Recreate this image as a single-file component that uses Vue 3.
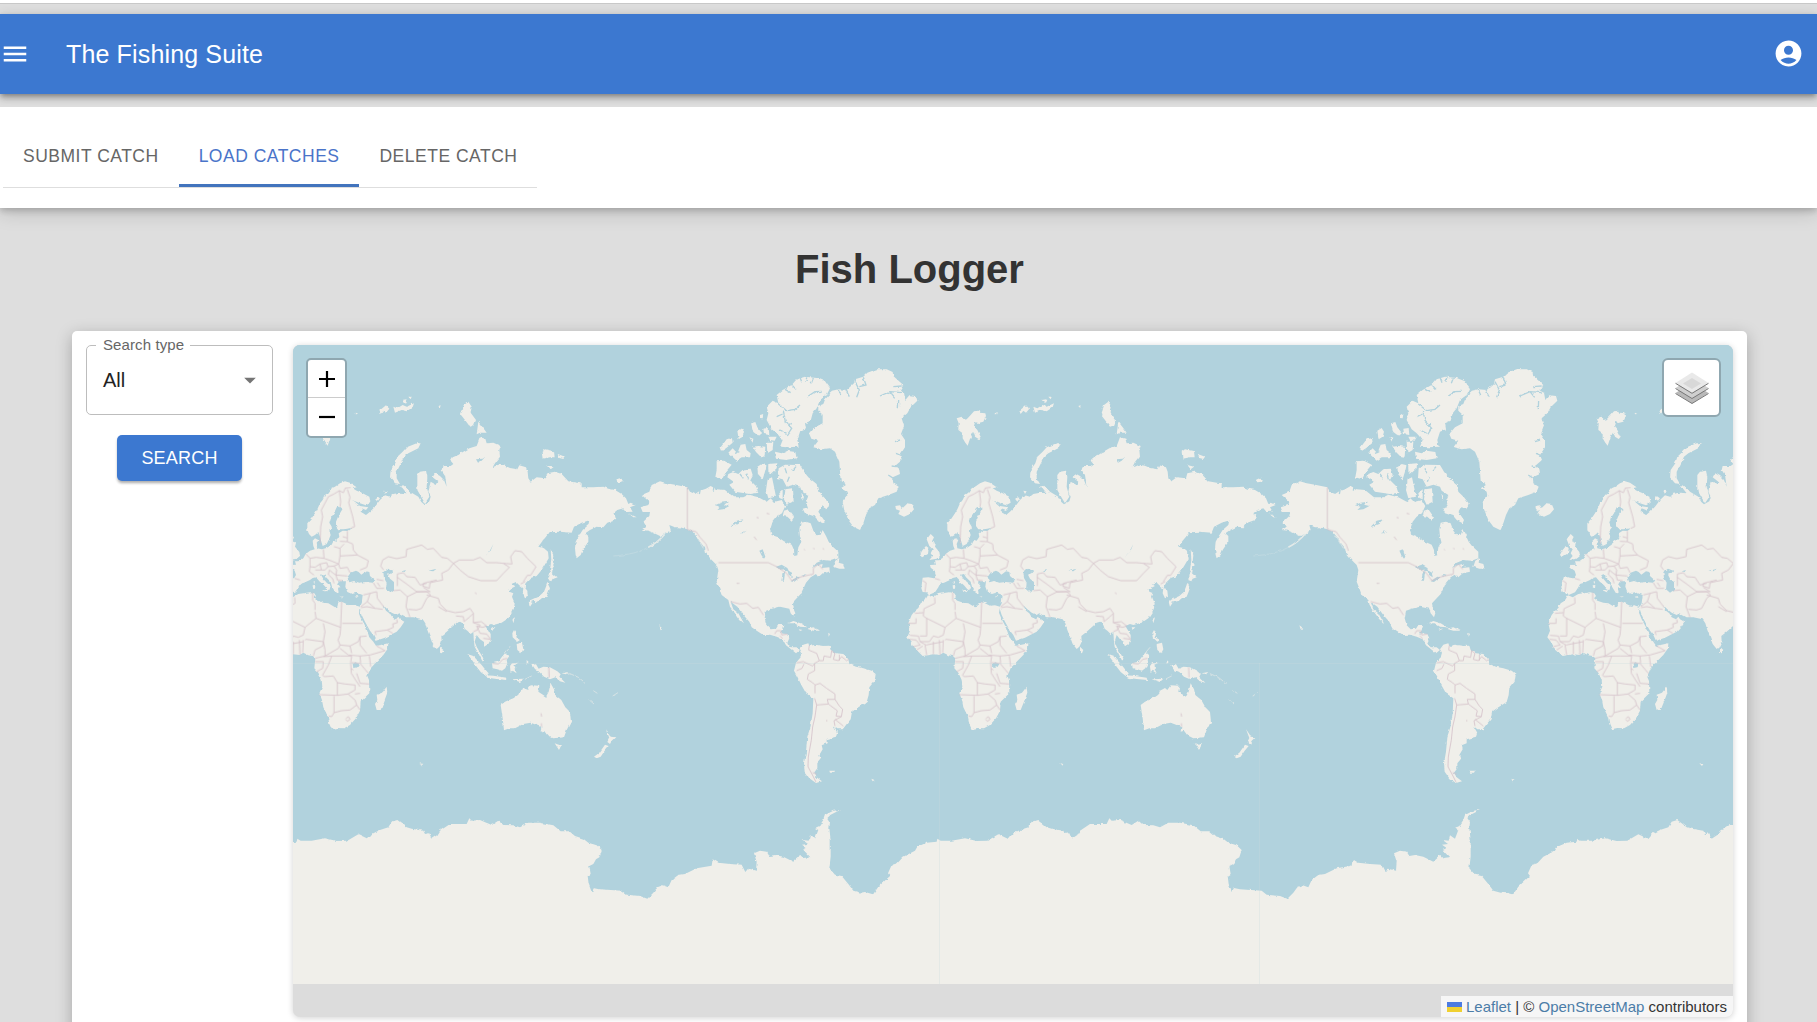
<script setup>
const tabs = [
  { label: 'Submit Catch', active: false },
  { label: 'Load Catches', active: true },
  { label: 'Delete Catch', active: false },
]

// Horizontal offsets of the repeated world
const worlds = [-640, 0, 640]

const oldWorld = [
  // Europe and Asia
  'M270 428L255 424 240 430 225 440 215 445 205 458 195 465 188 480 180 490 172 508 165 520 155 535 142 550 142 570 147 582 155 590 165 585 175 576 180 590 184 605 188 618 200 612 206 600 212 585 208 572 216 562 208 548 212 535 222 520 230 502 240 500 248 506 240 520 234 530 228 545 228 558 235 568 250 568 262 566 275 563 262 573 248 572 236 580 238 590 230 602 222 600 215 614 200 624 185 628 172 625 170 612 175 600 165 595 158 602 160 618 164 628 150 632 137 642 130 655 118 664 105 664 108 674 90 675 92 683 104 692 108 705 102 715 85 712 68 713 66 728 64 745 68 756 80 757 86 765 105 757 115 742 120 732 132 728 150 720 158 714 168 712 178 724 192 736 202 748 208 751 212 738 200 728 190 716 183 704 192 702 198 712 212 725 216 740 228 760 236 758 234 746 243 744 234 732 238 724 258 724 256 740 262 756 276 762 290 758 308 765 305 790 298 803 305 825 315 845 330 872 340 885 348 902 375 893 410 875 422 862 433 845 420 838 415 830 408 838 395 832 388 820 378 812 370 796 382 808 395 818 410 825 418 820 440 832 460 832 488 838 496 850 502 870 510 890 518 912 530 927 538 920 545 905 544 888 560 875 575 862 590 848 600 845 608 850 614 866 622 872 632 882 640 876 642 905 644 920 655 940 668 965 670 955 660 938 650 920 644 905 650 885 660 898 672 906 672 920 685 912 692 900 692 885 682 868 676 858 690 852 700 855 725 848 745 835 755 820 762 805 764 790 756 770 760 760 748 755 746 748 765 738 755 732 768 726 778 736 790 745 788 760 795 775 804 770 802 752 794 742 798 728 812 714 830 708 845 690 856 672 866 655 864 635 852 625 835 620 848 602 858 590 868 577 900 575 935 578 942 560 965 548 988 541 985 555 968 570 955 590 947 605 945 625 947 645 950 655 962 645 968 630 985 605 985 588 976 580 990 570 1010 560 1030 562 1042 548 1065 540 1070 528 1060 520 1072 510 1090 505 1100 516 1118 515 1110 502 1127 495 1112 488 1105 492 1098 475 1085 462 1065 450 1045 446 1030 440 1000 442 965 442 965 430 950 428 925 424 905 402 885 395 862 400 858 415 830 412 812 425 805 415 803 395 798 382 778 376 772 388 750 384 735 377 715 374 698 382 705 370 720 350 718 330 722 318 700 308 680 310 676 296 660 292 655 305 650 318 628 325 610 335 595 345 578 352 572 362 580 372 572 378 548 378 545 390 555 405 560 440 552 420 540 408 525 400 518 412 535 425 530 435 512 425 508 440 505 455 512 470 508 484 492 493 484 486 475 470 450 455 430 435 428 445 440 460 420 458 400 462 390 470 375 466 360 480 345 500 330 515 318 525 302 515 305 505 318 510 325 502 300 498 285 485 276 480 300 490 318 496 332 488 328 470 305 458 290 452 278 445 290 442Z',
  // Africa
  'M300 800L285 796 270 797 255 790 245 785 235 787 232 800 225 802 205 790 190 788 172 782 162 775 168 768 163 760 150 757 115 762 98 772 84 766 74 782 62 790 55 804 45 812 35 825 25 850 30 872 22 892 32 905 40 922 55 935 68 948 100 943 118 945 130 938 145 946 158 948 166 955 163 985 175 998 185 1020 187 1040 178 1060 186 1080 190 1102 204 1130 208 1152 215 1168 232 1164 252 1165 270 1155 288 1135 300 1112 302 1085 328 1060 327 1020 322 1008 332 985 350 965 370 945 384 925 385 910 365 914 348 917 340 905 328 892 318 862 305 838 297 818Z',
  // Arctic islands
  'M170 235L185 230 190 240 200 238 212 225 222 214 235 212 238 218 256 220 258 228 250 245 235 249 225 246 222 258 232 270 242 290 236 297 225 290 220 276 212 290 203 317 196 308 188 295 188 280 175 270 176 250Z',
  'M482 310L470 310 440 322 428 335 412 350 406 370 392 390 390 412 405 430 420 432 410 415 410 395 425 365 432 350 445 340 475 325Z',
  'M472 405L480 395 498 392 502 410 500 440 508 470 495 490 486 475 472 450Z',
  'M612 195L625 185 635 200 632 218 648 240 642 256 630 260 615 240 603 225 608 210ZM655 245L668 262 680 278 660 278 650 283Z',
  'M845 335L855 328 882 334 884 352 870 352 848 356ZM893 342L915 350 910 357 898 354ZM862 375L882 380 872 388ZM1068 420L1085 416 1088 424 1072 427Z',
  'M358 212L378 196 388 206 378 218 370 212 362 222ZM400 200L412 205 428 195 440 200 462 190 458 202 440 214 425 210 405 218ZM425 180L440 178 435 188ZM445 170L455 170 452 178ZM535 198L542 196 540 203ZM285 218L292 222 284 223ZM370 452L380 454 375 462ZM350 468L360 475 352 485 346 478ZM418 438L435 440 450 455 432 446Z',
  // Britain and Ireland
  'M92 582L102 592 96 604 108 608 105 620 118 636 120 648 110 656 88 660 98 648 92 640 98 628 88 618 80 598ZM66 632L78 618 86 624 84 642 66 652 60 645Z',
  // Islands of Asia
  'M872 628L880 645 878 665 884 675 878 685 876 702 870 690 874 660ZM870 695L890 712 878 716 874 724 864 720 868 708ZM862 728L870 745 860 770 845 775 835 784 820 783 808 788 812 780 838 768 852 755 858 740ZM806 785L818 788 810 800ZM826 782L838 782 830 788ZM540 920L550 930 546 940 540 938ZM757 838L765 832 760 850ZM695 862L706 862 698 870ZM762 870L768 880 766 892 780 900 772 905 758 892 757 880ZM770 912L786 908 790 928 784 940 772 930ZM748 925L754 918 736 940Z',
  'M622 942L640 948 665 975 675 988 686 1000 680 1010 662 996 650 980 636 960ZM676 1006L700 1007 720 1010 740 1013 742 1020 710 1017 684 1013ZM755 1018L790 1016 780 1026 762 1020ZM696 970L715 965 726 950 736 938 748 948 740 960 742 970 736 985 726 992 712 988 698 985ZM750 978L756 970 776 968 760 976 770 984 764 988 770 1000 758 992 752 1000ZM800 960L806 966 800 972Z',
  'M814 975L828 973 836 986 850 980 870 982 892 994 902 1003 898 1010 916 1028 900 1024 886 1012 870 1018 852 1010 838 996 824 990ZM905 1000L925 996 918 1003Z',
  'M722 1095L735 1085 760 1075 775 1064 780 1052 795 1044 802 1050 812 1036 838 1037 835 1055 858 1070 866 1055 872 1030 882 1048 886 1065 904 1080 916 1102 930 1116 933 1145 920 1170 912 1192 880 1195 862 1186 852 1172 842 1175 844 1160 828 1154 812 1148 790 1152 765 1165 748 1165 732 1171 728 1135ZM884 1210L896 1214 906 1212 897 1230Z',
  'M1038 1168L1048 1182 1052 1190 1066 1192 1055 1202 1050 1212 1042 1206 1048 1194ZM1035 1214L1046 1218 1034 1232 1022 1250 1010 1255 1002 1250 1018 1238Z',
  'M380 1040L382 1058 372 1085 362 1110 350 1110 345 1092 352 1080 350 1064 366 1058Z',
  // Mediterranean islands
  'M158 736L166 735 165 746 159 746ZM160 725L165 724 164 732ZM186 750L204 750 200 757ZM238 770L252 769 246 772ZM284 770L296 768 290 773Z',
]

const oldWorldWater = [
  'M262 712L272 698 288 692 296 696 304 704 318 694 328 696 330 708 346 722 338 728 318 726 298 728 282 723 268 727Z',
  'M370 696L384 686 400 692 394 700 384 704 390 716 402 726 402 750 390 758 378 748 380 728 372 714Z',
  'M700 612L692 632 674 650 688 635Z',
  'M278 972L286 967 298 972 292 982 280 984Z',
  'M648 358L668 356 676 350 665 362 654 368ZM505 692L530 686 520 694ZM425 694L438 690 434 696Z',
]

const oldWorldBorders = [
  'M180 612L182 560 188 530 184 510 205 470 222 462 238 452 250 458 256 444 272 442M238 452L242 485 240 500M262 448L270 472 266 488 278 530 284 560 272 565M262 573L262 605 240 604M248 590L262 594M262 605L278 612 280 630 292 645 240 648 240 625 252 612M240 625L222 620M292 645L325 662 320 682 300 690M240 648L236 672 240 685 262 682 270 698M190 628L192 655 212 662 236 672M192 655L168 652 150 655 138 642M150 655L150 680 165 682 180 672 200 668 204 680 222 678 236 672M150 680L148 695 162 705M204 680L195 690 184 690M222 678L230 690 228 705 262 708M208 690L220 700 228 705 232 720 248 722M208 690L205 704 218 716 222 730M68 722L78 728 75 755M104 715L120 720M166 690L184 690 180 672',
  'M371 690L362 678 368 660 385 650 410 656 438 650 440 628 485 615 502 628 520 625 545 652 562 655 580 670 598 660 640 660 660 652 680 668 710 668 730 670 756 672 752 650 765 632 785 635 802 655 828 680 812 706 802 706M580 670L565 690 545 700 548 720 510 728 508 745 488 738 490 730 530 720M580 670L600 690 625 710 662 722 710 722 730 700 748 682 730 670M802 706L790 725M412 738L412 702 430 698 440 710 465 712 480 735 500 730M412 712L440 732 470 755 510 755 490 742M400 752L420 750 442 770 438 800 450 832M442 770L470 756 500 755 512 765 500 775 485 805 470 810 445 808M500 765L535 775 540 792 560 812 585 818 610 815 630 805 640 820 630 830 612 845 610 830 588 828M535 800L560 815M640 820L640 848 660 855 652 870 640 875M640 848L664 845 680 858 668 862 650 858 660 880 680 882 692 898 670 895',
  'M340 728L350 745 372 745M350 718L370 722M352 728L360 740M310 765L330 760 350 755M330 760L322 785 302 800M350 755L352 775 372 802M322 785L345 805 368 808M303 803L320 800 345 805M348 885L345 875 382 870 400 862 398 852 412 848 410 838M382 870L398 880',
  'M158 757L158 780 165 790 165 810M165 815L168 835 242 862 245 785M247 850L308 850M242 862L240 885 234 900 240 915 235 925 195 948M168 835L135 862 80 835M190 850L195 875 190 905 195 930M135 862L130 885 115 892 100 888 88 905 60 905 55 888 30 886M80 835L80 888 60 888M80 835L70 828 72 806 105 790 104 772M45 820L70 818M25 850L48 850 48 835M135 900L138 898 190 905 188 918 165 930 160 948M130 900L128 938M118 900L120 945M100 905L100 943M75 915L80 945M60 905L78 915 130 905M28 898L48 900 60 915 40 920M50 930L68 918M195 930L195 948 165 955M240 915L270 918 295 905 300 890 320 888M240 925L265 945 300 948 330 945 375 932 350 918M270 918L275 940M300 890L300 915 320 940M165 965L190 965 188 985 170 995M190 950L215 948 240 948 275 948 272 968 274 1000 290 1025 300 1040M215 948L205 975 188 1005 192 1010 220 1008 232 1028 255 1032 285 1035M275 968L300 970 325 1000M300 948L302 970M328 948L332 980M272 985L280 990M290 1000L300 1030 328 1032M178 1064L232 1066 264 1062 285 1050 285 1035M232 1028L232 1066M264 1062L285 1080 290 1095 270 1110 245 1112 222 1118 222 1068M285 1062L300 1060M222 1118L215 1130 206 1128M290 1095L300 1110M258 1135L265 1130 270 1138 262 1144 257 1138',
  'M866 982L867 1012M698 970L715 972 728 958 742 955M843 1120L845 1130M844 1150L845 1160M645 758L650 762M795 725L782 732',
]

const northAmerica = [
  'M125 465L148 455 155 435 180 424 200 430 225 434 262 442 270 455 285 462 300 452 318 446 332 438 350 448 375 450 390 462 402 472 430 472 445 464 475 472 500 485 512 475 522 486 545 480 556 498 546 520 530 530 518 545 510 570 515 585 535 592 552 604 575 614 582 630 583 648 592 646 595 622 604 605 600 590 598 568 602 548 618 545 632 550 640 572 650 586 662 584 668 570 678 588 686 605 696 618 715 635 715 655 695 662 670 660 650 668 636 684 652 676 668 672 665 684 688 682 690 695 668 700 655 712 648 702 632 712 618 728 612 742 602 762 590 775 576 790 578 800 586 820 582 832 572 820 568 806 540 800 515 806 498 812 494 835 500 856 512 868 528 866 535 855 550 855 545 870 540 880 562 882 568 895 562 908 572 922 590 922 600 930 588 940 576 930 558 916 548 898 530 890 510 884 490 885 470 872 455 862 448 845 430 825 412 800 392 785 400 808 415 820 432 850 418 838 405 820 390 800 385 780 365 765 358 745 350 725 355 690 350 675 335 660 318 640 315 625 300 605 290 590 278 575 262 568 240 562 225 562 208 555 212 570 195 582 180 588 160 578 145 572 125 570 140 560 130 545 148 528 150 516 128 516 122 502 145 495 148 485Z',
  // Arctic archipelago
  'M500 200L518 182 535 190 530 165 548 150 575 135 590 118 615 110 650 114 675 124 690 145 680 165 660 180 650 205 638 220 632 242 615 250 618 268 600 275 592 300 596 320 565 322 540 320 548 300 530 280 515 268 500 240 505 220Z',
  'M525 335L545 340 560 332 586 336 590 355 560 360 528 356Z',
  'M536 385L555 374 600 375 612 395 625 412 650 432 655 455 672 472 686 490 680 508 665 498 655 515 672 540 668 550 650 540 640 528 615 520 608 506 630 500 618 482 625 465 605 452 600 440 580 434 560 440 548 418 534 414Z',
  'M385 402L400 396 415 402 430 388 452 386 458 405 450 420 468 438 475 458 452 462 425 458 405 455 388 434 402 426 382 412Z',
  'M350 364L372 362 395 374 380 392 366 418 346 412 350 390Z',
  'M362 322L380 298 396 295 398 308 378 325 366 332ZM385 338L398 325 412 340 422 314 436 312 440 330 452 340 450 352 425 352 410 362ZM412 272L425 264 432 275 428 290 416 298ZM453 250L466 246 472 262 486 280 476 288 460 276ZM490 266L506 264 508 285 492 282ZM458 320L475 318 496 320 494 350 480 348 468 336ZM500 305L520 305 518 330 502 340ZM448 292L460 296 458 308ZM505 290L530 290 524 302 510 300ZM480 225L490 222 488 235 480 234ZM538 285L552 290 545 300Z',
  'M472 380L485 372 500 376 494 398 488 418 474 402ZM505 372L532 370 530 385 514 400 504 396ZM503 418L516 412 522 440 528 470 505 475 498 450ZM535 460L548 448 548 478 538 474ZM556 448L576 445 578 485 560 494 552 478ZM604 462L612 470 608 482ZM552 512L565 508 582 532 575 542 562 530 548 528ZM620 490L640 490 645 500 625 505Z',
  // Greenland
  'M628 282L645 262 668 250 668 224 655 212 655 198 670 192 680 166 696 152 715 148 740 150 762 130 765 118 790 110 802 98 830 88 860 88 878 96 880 108 910 135 900 152 912 158 916 180 928 166 948 168 952 182 932 202 922 220 905 235 912 258 903 282 915 300 915 322 900 345 906 360 885 378 898 390 900 402 878 412 880 430 896 440 890 455 865 465 835 475 825 495 808 505 798 525 790 550 780 570 760 560 745 540 732 508 728 485 742 468 740 455 722 445 738 435 722 422 720 395 718 365 705 335 690 325 665 328 640 322 655 302 634 296Z',
  'M886 498L900 496 905 504 920 490 935 492 942 508 930 522 912 530 895 522 900 512 888 508Z',
  'M706 662L718 654 716 668 730 672 734 686 718 686 700 680ZM565 850L580 843 602 850 622 862 600 860 584 850ZM620 866L640 862 662 872 640 872ZM596 868L608 870 600 873ZM685 878L690 882 686 890ZM178 856L188 863 182 868ZM48 420L58 415 68 422 55 427ZM85 520L110 532 100 532ZM660 690L680 694 664 700Z',
]

const northAmericaWater = [
  'M345 496L362 488 385 485 372 494 388 498 370 508 352 510 362 500ZM392 560L410 542 430 538 415 552 395 560ZM422 580L440 572 430 580ZM478 632L488 628 496 650 492 656 484 645Z',
  'M528 680L545 674 562 684 568 696 550 688 536 690ZM548 700L556 692 552 722 544 722ZM562 690L576 698 578 712 566 704ZM572 724L592 710 600 712 582 726ZM604 708L620 702 610 710Z',
]

const northAmericaInlets = [
  'M535 192L560 212 585 208 600 195M550 215L556 245 575 265 562 285M530 230L548 222M600 112L606 128M620 112L618 126M640 114L634 130M575 134L588 148M555 148L572 158M625 168L645 155 665 154M575 250L565 260M668 182L690 160M738 150L748 170M765 125L778 150 770 172M790 112L798 135 778 140M715 150L722 165M840 168L870 155 905 158M870 155L884 172M905 138L880 140M896 180L895 205M900 300L885 305M900 345L888 340M888 380L875 378M880 415L865 405M722 425L735 430M725 455L738 455M560 400L555 385M578 392L588 380M568 410L562 425M420 402L430 415M440 400L445 418M405 340L418 335M300 452L298 462M342 440L340 452M475 285L468 300M540 270L560 280M508 350L520 335M545 535L556 545M500 350L505 420',
]

const northAmericaBorders = [
  'M262 442L262 568 275 572 288 575 300 592 318 612 325 632M355 668L505 668 530 680 560 700 575 722 605 710 640 702 640 685 655 672 668 688M392 785L420 792 440 790 458 805 475 802 490 825M524 882L530 872 542 872 545 885 562 882M540 888L548 896M470 532L476 534M500 520L508 522M462 590L470 600M410 730L418 730M640 625L644 627M668 625L672 628M612 628L615 630',
]

const southAmerica = [
  'M60 88L70 74 85 70 88 78 105 74 130 78 148 77 152 90 168 100 190 102 205 118 208 132 228 140 250 145 275 152 287 162 284 182 268 202 266 225 260 246 235 262 216 275 212 298 198 315 188 328 172 328 160 318 172 338 168 350 140 358 140 370 125 376 128 388 118 405 122 418 112 430 112 445 102 458 110 472 126 484 108 489 88 475 74 455 72 430 78 395 82 350 92 318 98 280 100 235 78 220 64 195 52 170 42 152 48 128 62 112 66 98Z',
  'M148 452L165 452 162 458 150 458ZM274 476L284 480 278 484ZM232 542L236 544ZM838 430L850 432 846 438Z',
]

const southAmericaBorders = [
  'M88 76L86 90 110 100 118 122 130 122 132 108 152 112 155 92M155 92L165 100 160 118 175 122 185 110 200 122 206 118M178 104L178 122M118 122L104 130 104 152 85 162 82 178 98 188 105 195 105 220M50 128L70 125 98 138 104 130M50 152L66 145 72 132M105 195L120 190 140 205 165 222 165 238 142 238 145 252 110 255 104 235M165 238L178 258 188 268 184 290 168 288 172 272 145 252M184 290L162 302 165 318M165 298L190 318M110 255L105 290 98 320 94 360 85 410 84 440 100 470 108 486M138 302L142 302M98 458L110 462',
]

const antarctica =
  'M-624 824L-620 822-605 800-570 768-576 760-565 735-548 730-530 710-495 692-488 680-460 668-430 665-428 656-418 662-385 662-345 655-310 663-278 662-245 643-215 657-200 640-180 630-155 622-145 605-128 600-112 612-100 622-85 626-50 632-45 642-32 640-25 656-8 645 0 632 30 612 80 612 88 595 95 602 120 600 155 615 175 602 190 615 220 616 240 622 265 608 300 608 340 616 362 634 388 634 405 648 430 656 445 668 470 676 485 690 478 712 468 718 460 732 448 738 452 762 443 768 446 792 455 816 462 804 480 808 545 812 560 824 600 828 622 836 640 818 652 802 668 796 685 802 695 780 715 765 735 762 770 745 815 737 818 718 835 728 870 732 905 734 916 756 924 746 948 752 950 725 942 700 960 692 980 695 988 708 1005 705 1030 710 1060 725 1075 712 1080 704 1090 714 1108 712 1088 690 1100 684 1086 674 1104 672 1088 660 1106 662 1110 646 1125 656 1135 630 1125 624 1138 618 1150 600 1155 585 1180 572 1200 570 1172 584 1162 594 1170 606 1168 625 1172 660 1172 710 1168 745 1185 764 1205 768 1225 792 1240 812 1262 818 1275 816 1304 824V1110H-624Z'
</script>

<template>
  <div class="page">
    <div class="top-edge"></div>
    <header class="appbar">
      <svg class="menu" viewBox="0 0 24 24"><path d="M3 18h18v-2H3v2zm0-5h18v-2H3v2zm0-7v2h18V6H3z" /></svg>
      <span class="brand">The Fishing Suite</span>
      <svg class="account" viewBox="0 0 24 24">
        <path d="M12 2C6.48 2 2 6.48 2 12s4.48 10 10 10 10-4.48 10-10S17.52 2 12 2zm0 4c1.93 0 3.5 1.57 3.5 3.5S13.93 13 12 13s-3.5-1.57-3.5-3.5S10.07 6 12 6zm0 14c-2.03 0-4.43-.82-6.14-2.88C7.55 15.8 9.68 15 12 15s4.45.8 6.14 2.12C16.43 19.18 14.03 20 12 20z" />
      </svg>
    </header>

    <nav class="tabbar">
      <div class="tabs">
        <button v-for="t in tabs" :key="t.label" class="tab" :class="{ active: t.active }">{{ t.label }}</button>
      </div>
    </nav>

    <h1>Fish Logger</h1>

    <main class="card">
      <aside class="filters">
        <fieldset class="select">
          <legend>Search type</legend>
          <div class="field">
            <span>All</span>
            <svg viewBox="0 0 24 24"><path d="M7 10l5 5 5-5z" /></svg>
          </div>
        </fieldset>
        <button class="search">Search</button>
      </aside>

      <section class="map">
        <svg class="tiles" viewBox="293 345 1440 639">
          <defs>
            <filter id="coast" x="0" y="0" width="100%" height="100%">
              <feTurbulence type="fractalNoise" baseFrequency="0.22" numOctaves="2" seed="4" />
              <feDisplacementMap in="SourceGraphic" scale="3" xChannelSelector="R" yChannelSelector="G" />
            </filter>
          </defs>
          <rect class="sea" x="293" y="345" width="1440" height="639" />
          <g filter="url(#coast)">
            <rect class="sea" x="283" y="335" width="1460" height="659" />
            <g v-for="dx in worlds" :key="dx" :transform="`translate(${dx} 0)`">
              <g transform="translate(900 340) scale(.33333)">
                <path v-for="d in oldWorld" :key="d" class="land" :d="d" />
                <path v-for="d in oldWorldWater" :key="d" class="sea" :d="d" />
                <path class="reef" d="M928 1000L955 1012 978 1030M1000 1052L1012 1060M988 1080L1002 1092M1058 1068L1074 1058M735 940L750 922M795 1018L815 1008" />
              </g>
              <g transform="translate(600 340) scale(.33333)">
                <path v-for="d in northAmerica" :key="d" class="land" :d="d" />
                <path v-for="d in northAmericaWater" :key="d" class="sea" :d="d" />
                <path v-for="d in northAmericaInlets" :key="d" class="inlet" :d="d" />
                <path class="chain" d="M195 582Q175 606 145 622" />
                <path class="reef faint" d="M145 622Q110 643 40 648" />
                <path class="reef" d="M290 590L310 625" />
              </g>
              <g transform="translate(780 620) scale(.33333)">
                <path v-for="d in southAmerica" :key="d" class="land" :d="d" />
              </g>
              <g transform="translate(1080 620) scale(.33333)">
                <path class="land" :d="antarctica" />
              </g>
            </g>
          </g>
          <g v-for="dx in worlds" :key="dx" :transform="`translate(${dx} 0)`">
            <g transform="translate(900 340) scale(.33333)">
              <path v-for="d in oldWorldBorders" :key="d" class="border" :d="d" />
            </g>
            <g transform="translate(600 340) scale(.33333)">
              <path v-for="d in northAmericaBorders" :key="d" class="border" :d="d" />
            </g>
            <g transform="translate(780 620) scale(.33333)">
              <path v-for="d in southAmericaBorders" :key="d" class="border" :d="d" />
            </g>
          </g>
          <path class="seam" d="M293 663.500H1733M939.500 663V984M1259.500 663V984" />
        </svg>

        <div class="zoom">
          <button>
            <svg viewBox="0 0 16 16"><path d="M0 8h16M8 0v16" /></svg>
          </button>
          <button>
            <svg viewBox="0 0 16 16"><path d="M0 8h16" /></svg>
          </button>
        </div>

        <div class="layers">
          <svg viewBox="0 0 34 33">
            <path d="M.5 21L17 11l16.500 10L17 31.500z" fill="#b9b9b9" />
            <path d="M.5 21.500L17 31.500l16.500-10" fill="none" stroke="#777" />
            <path d="M.5 16L17 6l16.500 10L17 26.500z" fill="#cfcfcf" />
            <path d="M.5 16.500L17 26.500l16.500-10" fill="none" stroke="#777" />
            <path d="M.5 11L17 .5 33.500 11 17 21z" fill="#e9e9e9" />
            <path d="M8 11.500L17 6l9 5.500-9 5.500z" fill="#d8d8d8" />
            <path d="M.5 11.300L17 21.300l16.500-10" fill="none" stroke="#777" />
          </svg>
        </div>

        <div class="credit">
          <svg viewBox="0 0 15 10"><path fill="#4c7be1" d="M0 0h15v5H0z" /><path fill="#f0d030" d="M0 5h15v5H0z" /></svg>
          <a>Leaflet</a> | © <a>OpenStreetMap</a> contributors
        </div>
      </section>
    </main>
  </div>
</template>

<style>
body {
  background: #dedede;
  overflow: hidden;
}
</style>

<style scoped>
.page {
  box-sizing: border-box;
  width: 1817px;
  height: 1022px;
  overflow: hidden;
  display: flex;
  flex-direction: column;
  background: #dedede;
  font-family: 'Liberation Sans', Arial, sans-serif;
}
button {
  font-family: inherit;
  border: 0;
  background: none;
  padding: 0;
  margin: 0;
}
.top-edge {
  flex: none;
  height: 3px;
  margin-bottom: 10px;
  background: #fff;
  border-bottom: 1px solid #c8c8c8;
}
.appbar {
  flex: none;
  height: 80px;
  display: flex;
  align-items: center;
  background: #3c78d0;
  color: #fff;
  box-shadow: 0 2px 5px -1px rgba(0, 0, 0, 0.3), 0 5px 6px rgba(0, 0, 0, 0.16), 0 1px 12px rgba(0, 0, 0, 0.12);
}
.appbar svg {
  fill: #fff;
  flex: none;
}
.menu {
  width: 30px;
  height: 30px;
}
.brand {
  margin-left: 36px;
  font-size: 25px;
  letter-spacing: 0.15px;
}
.account {
  width: 31px;
  height: 31px;
  margin: 0 13px 1px auto;
}
.tabbar {
  flex: none;
  box-sizing: border-box;
  height: 101px;
  margin-top: 13px;
  padding: 20px 0 0 3px;
  background: #fff;
  box-shadow: 0 3px 6px rgba(0, 0, 0, 0.17), 0 5px 18px rgba(0, 0, 0, 0.15);
  clip-path: inset(0 0 -40px 0);
}
.tabs {
  display: flex;
  width: 534px;
  height: 60px;
  border-bottom: 1px solid #dedede;
}
.tab {
  flex: none;
  box-sizing: border-box;
  height: 60px;
  padding: 1px 20px 0;
  font-size: 17.500px;
  letter-spacing: 0.5px;
  text-transform: uppercase;
  color: #666;
  border-bottom: 3px solid transparent;
}
.tab.active {
  color: #4a74c9;
  border-bottom-color: #4274bd;
}
h1 {
  flex: none;
  margin: 36px 0 0 2px;
  height: 50px;
  line-height: 50px;
  text-align: center;
  font-size: 40px;
  color: #333;
}
.card {
  flex: none;
  box-sizing: border-box;
  margin: 37px 70px 0 72px;
  height: 760px;
  padding: 14px;
  display: flex;
  gap: 20px;
  background: #fff;
  border-radius: 5px;
  box-shadow: 0 4px 16px rgba(0, 0, 0, 0.25);
}
.filters {
  width: 187px;
  display: flex;
  flex-direction: column;
  align-items: center;
}
.select {
  box-sizing: border-box;
  width: 187px;
  height: 79px;
  margin: -9px 0 0;
  padding: 0 12px 0 9px;
  border: 1px solid #bdbdbd;
  border-radius: 5px;
}
.select legend {
  height: 18px;
  line-height: 17px;
  padding: 0 6px 0 7px;
  font-size: 15px;
  letter-spacing: 0.1px;
  color: #666;
}
.field {
  display: flex;
  align-items: center;
  justify-content: space-between;
  height: 52px;
  padding-left: 7px;
  font-size: 20px;
  color: #222;
}
.field svg {
  width: 28px;
  height: 28px;
  margin-right: -4px;
  fill: #757575;
}
.search {
  width: 125px;
  height: 46px;
  margin-top: 20px;
  border-radius: 5px;
  background: #3c78d0;
  color: #fff;
  font-size: 18px;
  letter-spacing: 0.2px;
  text-transform: uppercase;
  box-shadow: 0 3px 3px -1px rgba(0, 0, 0, 0.2), 0 2px 3px rgba(0, 0, 0, 0.16);
}
.map {
  position: relative;
  width: 1440px;
  height: 672px;
  border-radius: 7px;
  overflow: hidden;
  background: #dcdcdc;
  box-shadow: 0 1px 6px rgba(0, 0, 0, 0.18);
}
.tiles {
  display: block;
  width: 1440px;
  height: 639px;
}
.sea {
  fill: #b1d2dd;
}
.land {
  fill: #f0efea;
}
.inlet {
  fill: none;
  stroke: #b1d2dd;
  stroke-width: 4;
}
.chain {
  fill: none;
  stroke: #e4eae8;
  stroke-width: 5;
}
.reef {
  fill: none;
  stroke: #d5e2e4;
  stroke-width: 3;
}
.reef.faint {
  stroke: #bfd9e1;
}
.border {
  fill: none;
  stroke: #d3bfc8;
  stroke-width: 2.400;
  stroke-linejoin: round;
}
.seam {
  fill: none;
  stroke: #c9d9dd;
  stroke-opacity: 0.3;
}
.zoom {
  position: absolute;
  left: 13px;
  top: 13px;
  width: 37px;
  border: 2px solid #8fa7b0;
  border-radius: 5px;
  background: #fff;
}
.zoom button {
  display: flex;
  box-sizing: border-box;
  width: 37px;
  height: 38px;
  padding: 0 0 1px 1px;
  align-items: center;
  justify-content: center;
}
.zoom button:first-child {
  padding: 1px 0 0 1px;
  border-bottom: 1px solid #ccc;
}
.zoom svg {
  width: 16px;
  height: 16px;
  stroke: #000;
  stroke-width: 2.200;
}
.layers {
  position: absolute;
  right: 12px;
  top: 13px;
  box-sizing: border-box;
  width: 59px;
  height: 59px;
  display: flex;
  align-items: center;
  justify-content: center;
  padding-top: 1px;
  border: 2px solid #8fa7b0;
  border-radius: 6px;
  background: #fff;
}
.layers svg {
  width: 34px;
  height: 33px;
}
.credit {
  position: absolute;
  right: 0;
  bottom: 0;
  box-sizing: border-box;
  width: 292px;
  height: 21px;
  padding-left: 6px;
  line-height: 21px;
  font-size: 15px;
  white-space: nowrap;
  background: #f6f6f6;
  color: #333;
}
.credit svg {
  width: 15px;
  height: 10px;
  margin-right: 4px;
}
.credit a {
  color: #4c7da8;
}
</style>
